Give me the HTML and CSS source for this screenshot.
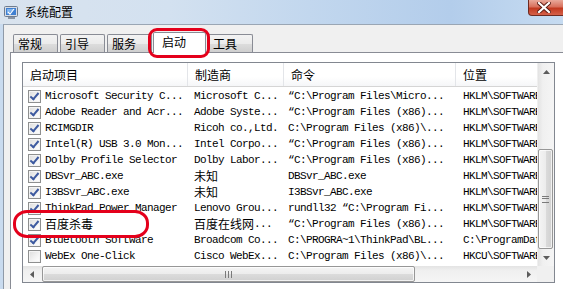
FILE: index.html
```html
<!DOCTYPE html>
<html>
<head>
<meta charset="utf-8">
<link rel="stylesheet" href="styles.css">
</head>
<body>
<div class="window">
  <div class="titlebar">
    <svg class="appicon" width="15" height="15" viewBox="0 0 15 15">
      <rect x="0.5" y="1.5" width="13" height="10" rx="1" fill="#d7dde6" stroke="#6f7c8e"/>
      <rect x="2" y="3" width="10" height="7" fill="#3f7fd0"/>
      <path d="M3 4 L11 4 L3 9 Z" fill="#7fb4ee"/>
      <path d="M4 7 L6 9 L10 4" fill="none" stroke="#ffffff" stroke-width="1.2"/>
      <rect x="4" y="12" width="7" height="2" fill="#8894a4"/>
    </svg>
    <span class="title">系统配置</span>
    <div class="spacer"></div>
    <div class="closebtn">
      <svg width="14" height="11" viewBox="0 0 14 11">
        <path d="M2 1 L12 10 M12 1 L2 10" stroke="#5a1b12" stroke-width="4" stroke-linecap="square"/>
        <path d="M2 1 L12 10 M12 1 L2 10" stroke="#ffffff" stroke-width="2.2" stroke-linecap="square"/>
      </svg>
    </div>
  </div>
  <div class="client">
    <div class="tabstrip">
      <div class="tab">常规</div>
      <div class="tab">引导</div>
      <div class="tab">服务</div>
      <div class="tab active">启动</div>
      <div class="tab">工具</div>
    </div>
    <div class="panel">
      <div class="list">
        <div class="viewport">
          <div class="header">
            <div class="hc c1">启动项目</div>
            <div class="hc c2">制造商</div>
            <div class="hc c3">命令</div>
            <div class="hc c4">位置</div>
          </div>
          <div class="rows">
            <div class="row"><div class="cell c1"><span class="cb on"></span>Microsoft Security C...</div><div class="cell c2">Microsoft C...</div><div class="cell c3">“C:\Program Files\Micro...</div><div class="cell c4">HKLM\SOFTWARE\Microsoft</div></div>
            <div class="row"><div class="cell c1"><span class="cb on"></span>Adobe Reader and Acr...</div><div class="cell c2">Adobe Syste...</div><div class="cell c3">“C:\Program Files (x86)...</div><div class="cell c4">HKLM\SOFTWARE\Microsoft</div></div>
            <div class="row"><div class="cell c1"><span class="cb on"></span>RCIMGDIR</div><div class="cell c2">Ricoh co.,Ltd.</div><div class="cell c3">C:\Program Files (x86)\...</div><div class="cell c4">HKLM\SOFTWARE\Microsoft</div></div>
            <div class="row"><div class="cell c1"><span class="cb on"></span>Intel(R) USB 3.0 Mon...</div><div class="cell c2">Intel Corpo...</div><div class="cell c3">“C:\Program Files (x86)...</div><div class="cell c4">HKLM\SOFTWARE\Microsoft</div></div>
            <div class="row"><div class="cell c1"><span class="cb on"></span>Dolby Profile Selector</div><div class="cell c2">Dolby Labor...</div><div class="cell c3">“C:\Program Files (x86)...</div><div class="cell c4">HKLM\SOFTWARE\Microsoft</div></div>
            <div class="row"><div class="cell c1"><span class="cb on"></span>DBSvr_ABC.exe</div><div class="cell c2"><span class="cjk">未知</span></div><div class="cell c3">DBSvr_ABC.exe</div><div class="cell c4">HKLM\SOFTWARE\Microsoft</div></div>
            <div class="row"><div class="cell c1"><span class="cb on"></span>I3BSvr_ABC.exe</div><div class="cell c2"><span class="cjk">未知</span></div><div class="cell c3">I3BSvr_ABC.exe</div><div class="cell c4">HKLM\SOFTWARE\Microsoft</div></div>
            <div class="row"><div class="cell c1"><span class="cb on"></span>ThinkPad Power Manager</div><div class="cell c2">Lenovo Grou...</div><div class="cell c3">rundll32 “C:\Program Fi...</div><div class="cell c4">HKLM\SOFTWARE\Microsoft</div></div>
            <div class="row"><div class="cell c1"><span class="cb on"></span><span class="cjk">百度杀毒</span></div><div class="cell c2"><span class="cjk">百度在线网</span>...</div><div class="cell c3">“C:\Program Files (x86)...</div><div class="cell c4">HKLM\SOFTWARE\Microsoft</div></div>
            <div class="row"><div class="cell c1"><span class="cb on"></span>Bluetooth Software</div><div class="cell c2">Broadcom Co...</div><div class="cell c3">C:\PROGRA~1\ThinkPad\BL...</div><div class="cell c4">C:\ProgramData</div></div>
            <div class="row"><div class="cell c1"><span class="cb"></span>WebEx One-Click</div><div class="cell c2">Cisco WebEx...</div><div class="cell c3">C:\Program Files (x86)\...</div><div class="cell c4">HKCU\SOFTWARE\Microsoft</div></div>
          </div>
        </div>
        <div class="vscroll">
          <div class="sbtn"><svg width="7" height="4" viewBox="0 0 7 4"><path d="M0 4 L3.5 0 L7 4 Z" fill="#5c5c5c"/></svg></div>
          <div class="vtrack">
            <div class="vthumb"><span class="grip-h"></span></div>
          </div>
          <div class="sbtn"><svg width="7" height="4" viewBox="0 0 7 4"><path d="M0 0 L3.5 4 L7 0 Z" fill="#5c5c5c"/></svg></div>
        </div>
        <div class="hscroll">
          <div class="sbtn"><svg width="4" height="7" viewBox="0 0 4 7"><path d="M4 0 L0 3.5 L4 7 Z" fill="#5c5c5c"/></svg></div>
          <div class="htrack">
            <div class="hthumb"><span class="grip-v"></span></div>
          </div>
          <div class="sbtn"><svg width="4" height="7" viewBox="0 0 4 7"><path d="M0 0 L4 3.5 L0 7 Z" fill="#5c5c5c"/></svg></div>
        </div>
        <div class="corner"></div>
      </div>
    </div>
  </div>
  <div class="mark mark-tab"></div>
  <div class="mark mark-row"></div>
</div>
</body>
</html>
```

FILE: styles.css
```css
html, body {
  margin: 0;
  padding: 0;
  background: #ffffff;
}
body {
  font-family: "Noto Sans CJK SC", "Liberation Sans", sans-serif;
  font-size: 12px;
  color: #000;
}
.window {
  position: relative;
  width: 563px;
  height: 289px;
  overflow: hidden;
  background: #c9dbef;
  display: flex;
  flex-direction: column;
}
.titlebar {
  height: 24px;
  flex: none;
  display: flex;
  align-items: flex-start;
  background: linear-gradient(to right, #d9e3ee 0%, #d3e1f0 30%, #c2d7ee 55%, #b3cdeb 80%, #c6dbf1 100%);
}
.appicon {
  margin: 5px 0 0 4px;
  flex: none;
}
.title {
  margin: 4px 0 0 6px;
  line-height: 16px;
  font-size: 12px;
  color: #000;
}
.spacer { flex: 1; }
.closebtn {
  width: 38px;
  height: 16px;
  margin-right: -3px;
  box-sizing: border-box;
  border: 1px solid #6e2a20;
  border-top: none;
  border-radius: 0 0 0 4px;
  background: linear-gradient(to bottom, #e9a99a 0%, #d8705c 45%, #c2391f 55%, #d5614a 100%);
  display: flex;
  align-items: center;
  justify-content: center;
  padding-right: 6px;
}
.client {
  flex: 1;
  margin-left: 3px;
  border-top: 1px solid #9aa6b4;
  border-left: 1px solid #8f9aa8;
  background: #f0f0f0;
  display: flex;
  flex-direction: column;
}
.tabstrip {
  height: 27px;
  flex: none;
  display: flex;
  align-items: flex-end;
  padding-left: 9px;
}
.tab {
  box-sizing: border-box;
  width: 45px;
  height: 18px;
  margin-right: 2px;
  padding-left: 4px;
  border: 1px solid #898c95;
  border-bottom: none;
  border-radius: 2px 2px 0 0;
  background: linear-gradient(to bottom, #f3f3f3 0%, #ebebeb 50%, #dddddd 51%, #cfcfcf 100%);
  line-height: 17px;
  font-size: 12px;
}
.tab.active {
  position: relative;
  z-index: 2;
  width: 53px;
  height: 21px;
  margin-left: -1px;
  margin-bottom: -1px;
  padding-left: 8px;
  background: #ffffff;
  line-height: 18px;
}
.panel {
  flex: 1;
  margin-left: 6px;
  border-top: 1px solid #898c95;
  border-left: 1px solid #898c95;
  background: #ffffff;
  padding: 9px 0 0 11px;
}
.list {
  width: 531px;
  height: 219px;
  border: 1px solid #828790;
  display: grid;
  grid-template-columns: 514px 17px;
  grid-template-rows: 203px 16px;
  background: #ffffff;
}
.viewport {
  overflow: hidden;
  font-family: "Liberation Mono", "DejaVu Sans Mono", monospace;
  font-size: 11px;
  letter-spacing: -0.6px;
}
.header {
  display: flex;
  height: 23px;
  border-bottom: 1px solid #d5d5d5;
  background: linear-gradient(to bottom, #ffffff 0%, #ffffff 60%, #f5f6f8 100%);
}
.hc {
  box-sizing: border-box;
  flex: none;
  border-right: 1px solid #e3e5e9;
  padding-left: 7px;
  font-family: "Noto Sans CJK SC", sans-serif;
  font-size: 12px;
  letter-spacing: 0;
  line-height: 23px;
}
.c1 { width: 165px; }
.c2 { width: 96px; }
.c3 { width: 172px; }
.c4 { width: 220px; }
.rows {
  padding-top: 1px;
}
.row {
  display: flex;
  height: 16px;
  white-space: nowrap;
}
.cell {
  box-sizing: border-box;
  flex: none;
  overflow: hidden;
  display: flex;
  align-items: center;
  height: 16px;
  line-height: 16px;
  color: #000;
}
.cell.c1 { padding-left: 5px; }
.cell.c2 { padding-left: 6px; }
.cell.c3 { padding-left: 4px; }
.cell.c4 { padding-left: 7px; }
.cjk {
  font-family: "Noto Sans CJK SC", sans-serif;
  font-size: 12px;
  letter-spacing: 0;
  line-height: 16px;
}
.cb {
  box-sizing: border-box;
  flex: none;
  width: 13px;
  height: 13px;
  margin-right: 4px;
  border: 1px solid #8e8f8f;
  background: linear-gradient(135deg, #dcdcdc 0%, #f4f4f4 60%, #ffffff 100%);
  box-shadow: inset 0 0 0 1px #f4f4f4;
  position: relative;
}
.cb.on::after {
  content: "";
  position: absolute;
  left: 3px;
  top: 0px;
  width: 3px;
  height: 7px;
  border-right: 2px solid #3d5aa0;
  border-bottom: 2px solid #3d5aa0;
  transform: rotate(40deg);
}
.vscroll {
  display: flex;
  flex-direction: column;
  background: linear-gradient(to right, #e3e3e3, #f0f0f0 30%, #f5f5f5);
  border-left: 1px solid #efefef;
  box-sizing: border-box;
}
.sbtn {
  flex: none;
  width: 17px;
  height: 17px;
  display: flex;
  align-items: center;
  justify-content: center;
}
.vtrack {
  flex: 1;
  display: flex;
  flex-direction: column;
  justify-content: flex-end;
  padding-bottom: 0;
}
.vthumb {
  box-sizing: border-box;
  height: 100px;
  margin: 0 1px 0 0;
  border: 1px solid #979797;
  border-radius: 2px;
  background: linear-gradient(to right, #f4f4f4 0%, #ececec 50%, #dbdbdb 51%, #d0d0d0 100%);
  box-shadow: inset 0 0 0 1px rgba(255,255,255,0.7);
  display: flex;
  align-items: center;
  justify-content: center;
}
.grip-h {
  width: 7px;
  height: 5px;
  border-top: 1px solid #7a7a7a;
  border-bottom: 1px solid #7a7a7a;
  background: linear-gradient(to bottom, transparent 1px, #7a7a7a 1px, #7a7a7a 2px, transparent 2px);
}
.hscroll {
  display: flex;
  background: linear-gradient(to bottom, #e3e3e3, #f0f0f0 30%, #f5f5f5);
}
.htrack {
  flex: 1;
  display: flex;
  padding-left: 2px;
}
.hthumb {
  box-sizing: border-box;
  width: 373px;
  height: 16px;
  border: 1px solid #979797;
  border-radius: 2px;
  background: linear-gradient(to bottom, #f4f4f4 0%, #ececec 50%, #dbdbdb 51%, #d0d0d0 100%);
  box-shadow: inset 0 0 0 1px rgba(255,255,255,0.7);
  display: flex;
  align-items: center;
  justify-content: center;
}
.grip-v {
  width: 5px;
  height: 7px;
  border-left: 1px solid #7a7a7a;
  border-right: 1px solid #7a7a7a;
  background: linear-gradient(to right, transparent 2px, #7a7a7a 2px, #7a7a7a 3px, transparent 3px);
}
.corner {
  background: #f0f0f0;
}
.mark {
  position: absolute;
  box-sizing: border-box;
  border: 3px solid #e4001b;
  z-index: 5;
}
.mark-tab {
  left: 148px;
  top: 28px;
  width: 62px;
  height: 30px;
  border-radius: 9px;
}
.mark-row {
  left: 13px;
  top: 210px;
  width: 136px;
  height: 28px;
  border-radius: 14px / 13px;
}
```
